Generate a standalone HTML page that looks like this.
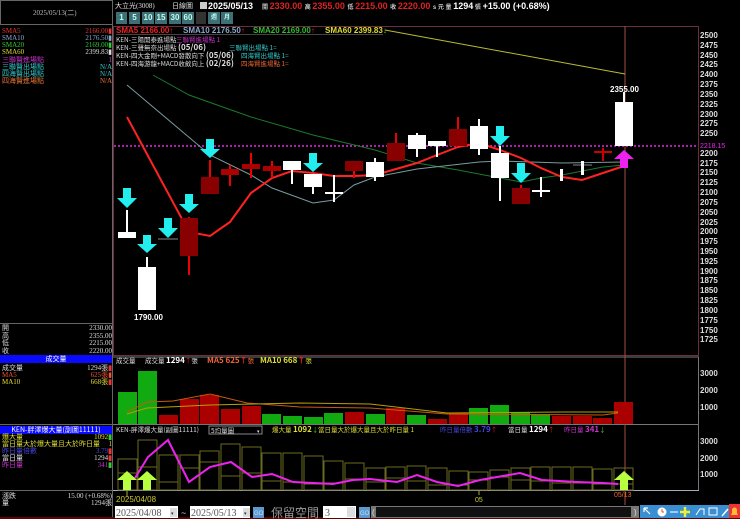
<!DOCTYPE html>
<html><head><meta charset="utf-8"><style>
*{margin:0;padding:0;box-sizing:border-box}
body{width:740px;height:519px;background:#000;overflow:hidden;position:relative;font-family:"Liberation Sans","Noto Sans CJK TC",sans-serif;color:#ddd}
.a{position:absolute;white-space:nowrap}
.s{font-size:7px;line-height:7px;font-family:"Liberation Serif","Noto Sans CJK TC",serif}
.r{right:0;text-align:right}
.btn{position:absolute;top:12px;height:12px;background:#3f6f76;color:#bfe;font-size:8px;font-weight:bold;text-align:center;line-height:12px}
</style></head><body>
<!-- left panel -->
<div class="a" style="left:0;top:0;width:113px;height:25px;border:1px solid #666;"></div>
<div class="a s" style="left:33px;top:10px;color:#bbb;font-size:7px">2025/05/13(二)</div>
<div class="a" style="left:112px;top:0;width:1px;height:519px;background:#666"></div>
<div class="a s" style="left:2px;top:28px;width:110px;color:#e33">SMA5<span class="a r" >2166.00▮</span></div>
<div class="a s" style="left:2px;top:35px;width:110px;color:#8ac">SMA10<span class="a r">2176.50▮</span></div>
<div class="a s" style="left:2px;top:42px;width:110px;color:#3c3">SMA20<span class="a r">2169.00▮</span></div>
<div class="a s" style="left:2px;top:49px;width:110px;color:#dd3">SMA60<span class="a r" style="color:#ddd">2399.83▮</span></div>
<div class="a s" style="left:2px;top:57px;width:110px;color:#c3c">三聯賢進場點<span class="a r">1</span></div>
<div class="a s" style="left:2px;top:64px;width:110px;color:#3cc">三聯賢出場點<span class="a r">N/A</span></div>
<div class="a s" style="left:2px;top:71px;width:110px;color:#3cc">四海賢出場點<span class="a r">N/A</span></div>
<div class="a s" style="left:2px;top:78px;width:110px;color:#e73">四海賢進場點<span class="a r">N/A</span></div>
<div class="a" style="left:0;top:323px;width:112px;height:1px;background:#666"></div>
<div class="a s" style="left:2px;top:325px;width:110px">開<span class="a r">2330.00</span></div>
<div class="a s" style="left:2px;top:333px;width:110px">高<span class="a r">2355.00</span></div>
<div class="a s" style="left:2px;top:340px;width:110px">低<span class="a r">2215.00</span></div>
<div class="a s" style="left:2px;top:348px;width:110px">收<span class="a r">2220.00</span></div>
<div class="a" style="left:0;top:355px;width:112px;height:8px;background:#0a0aff;color:#fff;font-size:7px;line-height:8px;text-align:center;font-family:'Noto Sans CJK TC'">成交量</div>
<div class="a s" style="left:2px;top:365px;width:110px">成交量<span class="a r">1294張<b style="color:#e33">▮</b></span></div>
<div class="a s" style="left:2px;top:372px;width:110px;color:#e53">MA5<span class="a r">625張▮</span></div>
<div class="a s" style="left:2px;top:379px;width:110px;color:#dd3">MA10<span class="a r">668張<b style="color:#e33">▮</b></span></div>
<div class="a" style="left:0;top:424px;width:112px;height:1px;background:#666"></div>
<div class="a" style="left:0;top:426px;width:112px;height:8px;background:#0a0aff;color:#fff;font-size:7px;line-height:8px;text-align:center;font-family:'Noto Sans CJK TC'">KEN-胖澤爆大量(副圖11111)</div>
<div class="a s" style="left:2px;top:434px;width:110px;color:#dd3">爆大量<span class="a r">1092<b style="color:#3c3">▮</b></span></div>
<div class="a s" style="left:2px;top:441px;width:110px;color:#dd3">當日量大於爆大量且大於昨日量<span class="a r">1</span></div>
<div class="a s" style="left:2px;top:448px;width:110px;color:#44d">昨日量倍數<span class="a r">3.79<b style="color:#e33">▮</b></span></div>
<div class="a s" style="left:2px;top:455px;width:110px">當日量<span class="a r">1294<b style="color:#e33">▮</b></span></div>
<div class="a s" style="left:2px;top:462px;width:110px;color:#c3c">昨日量<span class="a r">341<b style="color:#3c3">▮</b></span></div>
<div class="a" style="left:0;top:490px;width:112px;height:1px;background:#666"></div>
<div class="a s" style="left:2px;top:493px;width:110px">漲跌<span class="a r">15.00 (+0.68%)</span></div>
<div class="a s" style="left:2px;top:500px;width:110px">量<span class="a r">1294張</span></div>

<!-- header -->
<div class="a s" style="left:115px;top:3px;font-size:7px">大立光(3008)</div>
<div class="a s" style="left:172px;top:3px">日線圖</div>
<div class="a" style="left:200px;top:2px;width:7px;height:7px;background:#ccc"></div>
<div class="a" style="left:208px;top:1px;font-size:9px;font-weight:bold;color:#fff">2025/05/13</div>
<div class="a" style="left:262px;top:1px;font-size:9px;font-weight:bold;color:#d22"><span style="font-size:6px;color:#ccc">開 </span>2330.00 <span style="font-size:6px;color:#ccc">高 </span>2355.00 <span style="font-size:6px;color:#ccc">低 </span>2215.00 <span style="font-size:6px;color:#ccc">收 </span>2220.00 <span style="font-size:6px;color:#ccc">s 元 量 </span><span style="color:#fff">1294</span><span style="font-size:6px;color:#ccc"> 張 </span><span style="color:#fff">+15.00 (+0.68%)</span></div>
<div class="btn" style="left:116px;width:11px">1</div>
<div class="btn" style="left:129px;width:11px">5</div>
<div class="btn" style="left:142px;width:12px">10</div>
<div class="btn" style="left:155px;width:12px">15</div>
<div class="btn" style="left:169px;width:12px">30</div>
<div class="btn" style="left:182px;width:12px">60</div>
<div class="btn" style="left:196px;width:10px;background:#333"></div>
<div class="btn" style="left:208px;width:12px;font-size:6px">週</div>
<div class="btn" style="left:221px;width:12px;font-size:6px">月</div>

<svg class="a" style="left:0;top:0" width="740" height="519" viewBox="0 0 740 519" font-family="Liberation Sans, Noto Sans CJK TC, sans-serif">
<!-- frames -->
<rect x="113.5" y="26.5" width="585" height="329" fill="none" stroke="#6a2e3e"/>
<line x1="113" y1="357" x2="699" y2="357" stroke="#777"/>
<line x1="698.5" y1="357" x2="698.5" y2="491" stroke="#777"/>
<line x1="113" y1="424.5" x2="699" y2="424.5" stroke="#777"/>
<line x1="113" y1="490.5" x2="699" y2="490.5" stroke="#aab"/>
<line x1="625" y1="26" x2="625" y2="505" stroke="#a05040"/>
<!-- y axis -->
<g font-size="8" font-weight="bold" fill="#ddd">
<text x="700" y="38">2500</text><text x="700" y="48">2475</text><text x="700" y="58">2450</text><text x="700" y="67">2425</text><text x="700" y="77">2400</text><text x="700" y="87">2375</text><text x="700" y="97">2350</text><text x="700" y="107">2325</text><text x="700" y="117">2300</text><text x="700" y="126">2275</text><text x="700" y="136">2250</text><text x="700" y="156">2200</text><text x="700" y="166">2175</text><text x="700" y="175">2150</text><text x="700" y="185">2125</text><text x="700" y="195">2100</text><text x="700" y="205">2075</text><text x="700" y="215">2050</text><text x="700" y="225">2025</text><text x="700" y="234">2000</text><text x="700" y="244">1975</text><text x="700" y="254">1950</text><text x="700" y="264">1925</text><text x="700" y="274">1900</text><text x="700" y="283">1875</text><text x="700" y="293">1850</text><text x="700" y="303">1825</text><text x="700" y="313">1800</text><text x="700" y="323">1775</text><text x="700" y="333">1750</text><text x="700" y="342">1725</text>
<text x="700" y="376">3000</text><text x="700" y="393">2000</text><text x="700" y="410">1000</text>
<text x="700" y="444">3000</text><text x="700" y="461">2000</text><text x="700" y="477">1000</text>
</g>
<!-- legend -->
<g font-size="8" font-weight="bold">
<text x="116" y="33" fill="#e22">SMA5 2166.00↑</text>
<text x="183" y="33" fill="#8ac">SMA10 2176.50<tspan fill="#e22">↑</tspan></text>
<text x="253" y="33" fill="#3b3">SMA20 2169.00<tspan fill="#e22">↑</tspan></text>
<text x="325" y="33" fill="#dd3">SMA60 2399.83<tspan fill="#3c3">↓</tspan></text>
</g>
<line x1="116" y1="34.5" x2="383" y2="34.5" stroke="#888" stroke-width="0.5"/>
<g font-size="6.5" fill="#ddd" font-family="Noto Sans CJK TC, sans-serif">
<text x="116" y="42">KEN-三陽開泰進場點</text><text x="176" y="42" fill="#c3c">三聯賢進場點 1</text>
<text x="116" y="50">KEN-三聲無奈出場點 <tspan font-size="8" font-weight="bold">(05/06)</tspan></text><text x="229" y="50" fill="#3cc">三聯賢出場點 1=</text>
<text x="116" y="58">KEN-四大金剛+MACD發散向下 <tspan font-size="8" font-weight="bold">(05/06)</tspan></text><text x="241" y="58" fill="#3cc">四海賢出場點 1=</text>
<text x="116" y="66">KEN-四海游龍+MACD收斂向上 <tspan font-size="8" font-weight="bold">(02/26)</tspan></text><text x="241" y="66" fill="#e63">四海賢進場點 1=</text>
</g>
<!-- magenta dotted -->
<line x1="114" y1="146" x2="698" y2="146" stroke="#e2e" stroke-width="1.5" stroke-dasharray="2,2"/>
<text x="700" y="148" font-size="7" fill="#e2e">2218.15</text>
<!-- MA lines -->
<polyline fill="none" stroke="#bb3" stroke-width="1" points="385,30 625,74"/>
<polyline fill="none" stroke="#1a7a2a" stroke-width="1" points="153,75 189,95 251,117 313,135 375,150 417,163 458,170 500,178 521,182 541,178 562,175 603,167 624,165"/>
<polyline fill="none" stroke="#7a9aa0" stroke-width="1" points="127,85 210,155 251,175 272,188 313,203 334,200 354,185 375,177 417,169 479,162 500,161 562,163 624,162"/>
<polyline fill="none" stroke="#f22" stroke-width="2" points="127,117 189,232 210,236 230,222 251,193 272,178 292,171 313,173 334,176 354,176 375,175 396,169 417,163 437,155 458,147 479,143 500,150 521,158 541,168 562,177 582,180 603,173 624,166"/>
<!-- candles -->
<g stroke-width="2">
<line x1="127" y1="210" x2="127" y2="232" stroke="#fff"/><rect x="118" y="232" width="18" height="6" fill="#fff"/>
<line x1="147" y1="257" x2="147" y2="267" stroke="#fff"/><rect x="138" y="267" width="18" height="43" fill="#fff"/>
<line x1="158" y1="239" x2="178" y2="239" stroke="#888" stroke-width="1"/>
<line x1="189" y1="217" x2="189" y2="275" stroke="#e00"/><rect x="180" y="218" width="18" height="38" fill="#800"/>
<line x1="210" y1="160" x2="210" y2="177" stroke="#e00"/><rect x="201" y="177" width="18" height="17" fill="#800"/>
<line x1="230" y1="165" x2="230" y2="186" stroke="#e00"/><rect x="221" y="169" width="18" height="6" fill="#a00"/>
<line x1="251" y1="153" x2="251" y2="178" stroke="#e00"/><rect x="242" y="164" width="18" height="5" fill="#a00"/>
<line x1="272" y1="161" x2="272" y2="178" stroke="#e00"/><rect x="263" y="166" width="18" height="5" fill="#a00"/>
<line x1="292" y1="170" x2="292" y2="184" stroke="#fff"/><rect x="283" y="161" width="18" height="9" fill="#fff"/>
<line x1="313" y1="187" x2="313" y2="194" stroke="#fff"/><rect x="304" y="174" width="18" height="13" fill="#fff"/>
<line x1="334" y1="175" x2="334" y2="202" stroke="#fff"/><line x1="325" y1="193" x2="343" y2="193" stroke="#fff"/>
<line x1="354" y1="171" x2="354" y2="178" stroke="#e00"/><rect x="345" y="161" width="18" height="10" fill="#800"/>
<line x1="375" y1="158" x2="375" y2="181" stroke="#fff"/><rect x="366" y="162" width="18" height="15" fill="#fff"/>
<line x1="396" y1="133" x2="396" y2="143" stroke="#e00"/><rect x="387" y="143" width="18" height="18" fill="#800"/>
<line x1="417" y1="133" x2="417" y2="157" stroke="#fff"/><rect x="408" y="135" width="18" height="14" fill="#fff"/>
<line x1="437" y1="146" x2="437" y2="157" stroke="#fff"/><rect x="428" y="141" width="18" height="5" fill="#fff"/>
<line x1="458" y1="117" x2="458" y2="129" stroke="#e00"/><rect x="449" y="129" width="18" height="17" fill="#800"/>
<line x1="479" y1="119" x2="479" y2="155" stroke="#fff"/><rect x="470" y="126" width="18" height="23" fill="#fff"/>
<line x1="500" y1="146" x2="500" y2="201" stroke="#fff"/><rect x="491" y="153" width="18" height="25" fill="#fff"/>
<line x1="521" y1="185" x2="521" y2="188" stroke="#e00"/><rect x="512" y="188" width="18" height="16" fill="#800"/>
<line x1="541" y1="177" x2="541" y2="197" stroke="#fff"/><line x1="532" y1="191" x2="550" y2="191" stroke="#fff"/>
<rect x="560" y="169" width="3" height="12" fill="#fff"/>
<line x1="573" y1="165" x2="592" y2="165" stroke="#888" stroke-width="1"/><rect x="581" y="161" width="3" height="14" fill="#fff"/>
<line x1="603" y1="148" x2="603" y2="161" stroke="#c00"/><line x1="594" y1="152" x2="612" y2="152" stroke="#c00"/>
<line x1="624" y1="92" x2="624" y2="102" stroke="#fff"/><rect x="615" y="102" width="18" height="44" fill="#fff"/>
</g>
<text x="134" y="320" font-size="8" font-weight="bold" fill="#fff">1790.00</text>
<text x="610" y="92" font-size="8" font-weight="bold" fill="#fff">2355.00</text>
<!-- cyan arrows -->
<g fill="#2ee">
<path d="M123,188h8v10h6l-10,10l-10,-10h6z"/>
<path d="M143,235h8v9h6l-10,9l-10,-9h6z"/>
<path d="M164,218h8v10h6l-10,10l-10,-10h6z"/>
<path d="M185,194h8v10h6l-10,9l-10,-9h6z"/>
<path d="M206,139h8v10h6l-10,9l-10,-9h6z"/>
<path d="M309,153h8v10h6l-10,9l-10,-9h6z"/>
<path d="M496,126h8v10h6l-10,10l-10,-10h6z"/>
<path d="M517,163h8v10h6l-10,10l-10,-10h6z"/>
</g>
<path d="M624,150l10,9h-6v9h-8v-9h-6z" fill="#e2e"/>
<!-- volume -->
<g>
<rect x="118" y="392" width="19" height="32" fill="#1a1"/>
<rect x="138" y="371" width="19" height="53" fill="#1a1"/>
<rect x="159" y="415" width="19" height="9" fill="#a00"/>
<rect x="180" y="399" width="19" height="25" fill="#a00"/>
<rect x="200" y="395" width="19" height="29" fill="#a00"/>
<rect x="221" y="409" width="19" height="15" fill="#a00"/>
<rect x="242" y="406" width="19" height="18" fill="#a00"/>
<rect x="262" y="414" width="19" height="10" fill="#1a1"/>
<rect x="283" y="416" width="19" height="8" fill="#1a1"/>
<rect x="304" y="417" width="19" height="7" fill="#1a1"/>
<rect x="324" y="413" width="19" height="11" fill="#1a1"/>
<rect x="345" y="412" width="19" height="12" fill="#a00"/>
<rect x="366" y="414" width="19" height="10" fill="#1a1"/>
<rect x="386" y="408" width="19" height="16" fill="#a00"/>
<rect x="407" y="415" width="19" height="9" fill="#1a1"/>
<rect x="428" y="419" width="19" height="5" fill="#a00"/>
<rect x="449" y="413" width="19" height="11" fill="#a00"/>
<rect x="469" y="408" width="19" height="16" fill="#1a1"/>
<rect x="490" y="405" width="19" height="19" fill="#1a1"/>
<rect x="511" y="412" width="19" height="12" fill="#1a1"/>
<rect x="531" y="414" width="19" height="10" fill="#1a1"/>
<rect x="552" y="416" width="19" height="8" fill="#a00"/>
<rect x="573" y="416" width="19" height="8" fill="#a00"/>
<rect x="593" y="418" width="19" height="6" fill="#a00"/>
<rect x="614" y="402" width="19" height="22" fill="#a00"/>
</g>
<polyline fill="none" stroke="#c85a10" points="127,412 147,402 173,401 210,394 247,403 300,407 370,408 447,414 603,415 618,413"/>
<polyline fill="none" stroke="#b8a000" points="127,414 147,408 210,405 300,403 370,404 447,413 560,412 618,412"/>
<g font-size="6.5" fill="#ddd" font-family="Noto Sans CJK TC, sans-serif">
<text x="116" y="363">成交量</text><text x="145" y="363">成交量 <tspan font-size="8" font-weight="bold" fill="#fff">1294</tspan><tspan fill="#e22">↑</tspan>張</text>
<text x="207" y="363" fill="#e63" font-size="8" font-weight="bold">MA5 625<tspan fill="#e22">↑</tspan><tspan font-size="6.5" font-weight="normal">張</tspan></text>
<text x="260" y="363" fill="#dd3" font-size="8" font-weight="bold">MA10 668<tspan fill="#e22">↑</tspan><tspan font-size="6.5" font-weight="normal">張</tspan></text>
</g>
<!-- indicator -->
<g fill="none" stroke="#6a6a20" stroke-width="1">
<rect x="118" y="459" width="19" height="31"/><line x1="118" y1="473" x2="137" y2="473"/>
<rect x="138" y="440" width="19" height="50"/><line x1="138" y1="467" x2="157" y2="467"/>
<rect x="159" y="455" width="19" height="35"/><line x1="159" y1="482" x2="178" y2="482"/>
<rect x="180" y="455" width="19" height="35"/><line x1="180" y1="468" x2="199" y2="468"/>
<rect x="200" y="451" width="19" height="39"/><line x1="200" y1="462" x2="219" y2="462"/>
<rect x="221" y="444" width="19" height="46"/><line x1="221" y1="476" x2="240" y2="476"/>
<rect x="242" y="447" width="19" height="43"/><line x1="242" y1="473" x2="261" y2="473"/>
<rect x="262" y="453" width="19" height="37"/><line x1="262" y1="481" x2="281" y2="481"/>
<rect x="283" y="453" width="19" height="37"/><line x1="283" y1="482" x2="302" y2="482"/>
<rect x="304" y="456" width="19" height="34"/><line x1="304" y1="484" x2="323" y2="484"/>
<rect x="324" y="461" width="19" height="29"/><line x1="324" y1="483" x2="343" y2="483"/>
<rect x="345" y="463" width="19" height="27"/><line x1="345" y1="479" x2="364" y2="479"/>
<rect x="366" y="468" width="19" height="22"/><line x1="366" y1="482" x2="385" y2="482"/>
<rect x="386" y="467" width="19" height="23"/><line x1="386" y1="478" x2="405" y2="478"/>
<rect x="407" y="466" width="19" height="24"/><line x1="407" y1="481" x2="426" y2="481"/>
<rect x="428" y="468" width="19" height="22"/><line x1="428" y1="485" x2="447" y2="485"/>
<rect x="449" y="471" width="19" height="19"/><line x1="449" y1="485" x2="468" y2="485"/>
<rect x="469" y="472" width="19" height="18"/><line x1="469" y1="480" x2="488" y2="480"/>
<rect x="490" y="470" width="19" height="20"/><line x1="490" y1="477" x2="509" y2="477"/>
<rect x="511" y="468" width="19" height="22"/><line x1="511" y1="480" x2="530" y2="480"/>
<rect x="531" y="467" width="19" height="23"/><line x1="531" y1="481" x2="550" y2="481"/>
<rect x="552" y="467" width="19" height="23"/><line x1="552" y1="483" x2="571" y2="483"/>
<rect x="573" y="467" width="19" height="23"/><line x1="573" y1="483" x2="592" y2="483"/>
<rect x="593" y="469" width="19" height="21"/><line x1="593" y1="484" x2="612" y2="484"/>
<rect x="614" y="468" width="19" height="22"/><line x1="614" y1="484" x2="633" y2="484"/>
</g>
<polyline fill="none" stroke="#e2e" stroke-width="2" points="135,478 148,457 168,440 189,482 210,467 231,462 252,477 272,474 293,482 333,484 353,480 370,479 397,482 417,475 437,482 458,486 480,480 520,473 542,480 577,482 603,483 618,484"/>
<g fill="#b8ff40">
<path d="M127,471l10,9h-6v10h-8v-10h-6z"/>
<path d="M147,471l10,9h-6v10h-8v-10h-6z"/>
<path d="M624,471l10,9h-6v10h-8v-10h-6z"/>
</g>
<g font-size="6.5" fill="#ddd" font-family="Noto Sans CJK TC, sans-serif">
<text x="116" y="432">KEN-胖澤爆大量(副圖11111)</text>
<rect x="209" y="426" width="53" height="8" fill="#000" stroke="#888"/><text x="211" y="433">5均量圖</text><text x="257" y="433" font-size="5">▾</text>
<text x="272" y="432" fill="#dd3">爆大量 <tspan font-size="8" font-weight="bold">1092</tspan><tspan fill="#3c3">↓</tspan></text>
<text x="318" y="432" fill="#dd3">當日量大於爆大量且大於昨日量 1</text>
<text x="440" y="432" fill="#44d">昨日量倍數 <tspan font-size="8" font-weight="bold">3.79</tspan><tspan fill="#e22">↑</tspan></text>
<text x="508" y="432">當日量 <tspan font-size="8" font-weight="bold" fill="#fff">1294</tspan><tspan fill="#e22">↑</tspan></text>
<text x="564" y="432" fill="#c3c">昨日量 <tspan font-size="8" font-weight="bold">341</tspan><tspan fill="#3c3">↓</tspan></text>
</g>
<!-- dates -->
<line x1="127" y1="491" x2="127" y2="496" stroke="#aa3"/>
<text x="116" y="502" font-size="8" fill="#cc3">2025/04/08</text>
<line x1="479" y1="491" x2="479" y2="495" stroke="#aa3"/>
<text x="475" y="502" font-size="7" fill="#cc3">05</text>
<text x="614" y="497" font-size="7" fill="#e63">05/13</text>
<!-- bottom toolbar -->
<rect x="0" y="517" width="740" height="2" fill="#600"/>
<rect x="115" y="506" width="63" height="12" fill="#fff"/><text x="116" y="516" font-size="10" fill="#555" font-family="Liberation Serif">2025/04/08</text>
<rect x="170" y="508" width="7" height="9" fill="#ddd"/><text x="171" y="515" font-size="5" fill="#333">▾</text>
<text x="181" y="516" font-size="9" fill="#ccc">~</text>
<rect x="190" y="506" width="60" height="12" fill="#fff"/><text x="191" y="516" font-size="10" fill="#555" font-family="Liberation Serif">2025/05/13</text>
<rect x="243" y="508" width="7" height="9" fill="#ddd"/><text x="244" y="515" font-size="5" fill="#333">▾</text>
<rect x="253" y="507" width="11" height="11" fill="#5a9ad0"/><text x="254" y="515" font-size="6" fill="#cde">GO</text>
<text x="271" y="517" font-size="12" fill="#999" font-family="Noto Sans CJK TC, sans-serif">保留空間</text>
<rect x="323" y="506" width="33" height="12" fill="#fff"/><text x="325" y="516" font-size="10" fill="#555" font-family="Liberation Serif">3</text>
<rect x="347" y="507" width="8" height="10" fill="#ddd"/>
<rect x="359" y="507" width="11" height="11" fill="#5a9ad0"/><text x="360" y="515" font-size="6" fill="#cde">GO</text>
<rect x="371" y="506" width="268" height="12" fill="#777"/><rect x="376" y="507" width="255" height="10" fill="#111"/>
<text x="372" y="515" font-size="8" fill="#ddd">(</text><text x="634" y="515" font-size="8" fill="#ddd">)</text>
<rect x="640" y="505" width="100" height="13" fill="#3a8fd0"/>
<g fill="#fff" stroke="#fff">
<path d="M644,508l6,6M644,508v4M644,508h4" fill="none" stroke-width="1.2"/>
<circle cx="662" cy="512" r="4.5" stroke="none"/><path d="M662,512v-3M662,512h2" stroke="#e44" fill="none"/>
<rect x="670" y="511" width="8" height="2" fill="#9cf" stroke="none"/>
<path d="M685,507v10M680,512h10" stroke="#ee3" stroke-width="2.5"/>
<path d="M696,515l4,-6h4v6" fill="none" stroke-width="1"/>
<rect x="709" y="508" width="8" height="7" fill="none" stroke-width="1"/>
<path d="M722,516l6,-7" stroke-width="1.5"/>
</g>
<rect x="729" y="504" width="11" height="14" fill="#e33"/>
<path d="M731,515h7l-1,-2v-3a2.5,2.5 0 0 0 -5,0v3z" fill="#fb3"/>
</svg>
</body></html>
